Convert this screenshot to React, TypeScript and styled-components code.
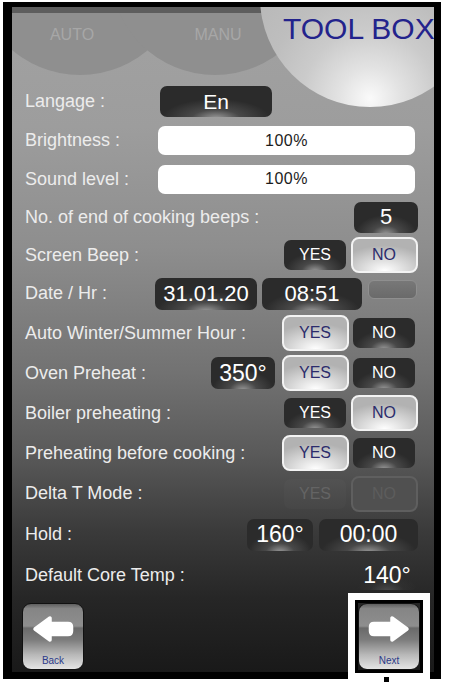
import styled, { createGlobalStyle, css } from 'styled-components';

const GlobalStyle = createGlobalStyle`
    html, body {
        margin: 0;
        padding: 0;
        background: #ffffff;
    }
    body {
        font-family: 'Liberation Sans', Arial, Helvetica, sans-serif;
    }
`;

const Page = styled.div`
    width: 453px;
    height: 682px;
    padding: 2px 0 0 3px;
    box-sizing: border-box;
    overflow: hidden;
`;

const Frame = styled.div`
    width: 438px;
    height: 677px;
    box-sizing: border-box;
    border-style: solid;
    border-color: #000;
    border-width: 5px 7px 7px 9px;
    display: flex;
    flex-direction: column;
    background: linear-gradient(
        180deg,
        #a2a2a2 0%,
        #9d9d9d 18%,
        #8e8e8e 36%,
        #727272 55%,
        #5a5a5a 67%,
        #3a3a3a 79%,
        #262626 89%,
        #191919 100%
    );
`;

const Header = styled.div`
    height: 100px;
    flex-shrink: 0;
    display: flex;
    align-items: flex-start;
    overflow: hidden;
`;

const TabStrip = styled.div`
    width: 300px;
    height: 68px;
    flex-shrink: 0;
    box-sizing: border-box;
    border-top: 6px solid #5d5d5d;
    display: flex;
    align-items: flex-start;
    overflow: hidden;
`;

const Tab = styled.div<{ $left: number; $dx: number }>`
    width: 210px;
    height: 210px;
    flex-shrink: 0;
    margin: -148px 0 0 ${(p) => p.$left}px;
    box-sizing: border-box;
    padding-top: 161px;
    padding-left: ${(p) => Math.max(0, p.$dx * 2)}px;
    padding-right: ${(p) => Math.max(0, -p.$dx * 2)}px;
    border-radius: 50%;
    background: #8f8f8f;
    color: #a7a7a7;
    font-size: 16px;
    line-height: 18px;
    text-align: center;
`;

const ToolBox = styled.div`
    width: 220px;
    height: 220px;
    flex-shrink: 0;
    margin: -120px 0 0 -52px;
    box-sizing: border-box;
    padding: 127px 0 0 23px;
    border-radius: 50%;
    background: radial-gradient(
        circle 150px at 50% 96%,
        #fafafa 0%,
        #e3e3e3 20%,
        #cbcbcb 45%,
        #bebebe 70%,
        #b8b8b8 100%
    );
    color: #23238c;
    font-size: 30px;
    line-height: 30px;
    white-space: nowrap;
`;

const Rows = styled.div`
    margin-top: -25px;
    display: flex;
    flex-direction: column;
`;

const Row = styled.div<{ $h?: number }>`
    height: ${(p) => p.$h ?? 39}px;
    display: flex;
    align-items: center;
    padding: 0 16px 0 13px;
`;

const Label = styled.div<{ $w?: number }>`
    ${(p) =>
        p.$w
            ? css`
                  width: ${p.$w}px;
                  flex-shrink: 0;
              `
            : css`
                  flex: 1;
              `}
    color: #ececec;
    font-size: 18px;
    white-space: nowrap;
`;

const darkFill = css`
    background: radial-gradient(
            ellipse 48% 62% at 50% 104%,
            rgba(200, 200, 200, 0.7) 0%,
            rgba(140, 140, 140, 0.3) 45%,
            rgba(60, 60, 60, 0) 100%
        ),
        #2b2b2b;
`;

const ValueBox = styled.div<{ $w: number; $h?: number; $fs?: number; $gap?: number; $faint?: boolean }>`
    width: ${(p) => p.$w}px;
    height: ${(p) => p.$h ?? 32}px;
    flex-shrink: 0;
    margin-right: ${(p) => p.$gap ?? 0}px;
    display: flex;
    align-items: center;
    justify-content: center;
    border-radius: 7px;
    color: #ffffff;
    font-size: ${(p) => p.$fs ?? 22}px;
    ${darkFill}
    ${(p) =>
        p.$faint &&
        css`
            background: radial-gradient(
                ellipse 50% 55% at 50% 104%,
                rgba(110, 110, 110, 0.5) 0%,
                rgba(80, 80, 80, 0.15) 55%,
                rgba(40, 40, 40, 0) 100%
            );
        `}
`;

const Blank = styled.div`
    width: 47px;
    height: 17px;
    flex-shrink: 0;
    align-self: flex-start;
    margin-top: 6px;
    border: 1px solid #8f8f8f;
    border-radius: 6px;
    background: linear-gradient(#787878, #6a6a6a);
`;

const Bar = styled.div`
    flex: 1;
    height: 29px;
    margin-right: 3px;
    display: flex;
    align-items: center;
    justify-content: center;
    border-radius: 7px;
    background: #ffffff;
    color: #1c1c1c;
    font-size: 16px;
    letter-spacing: 0.5px;
`;

const Pair = styled.div`
    display: flex;
    gap: 1px;
    flex-shrink: 0;
`;

const Slot = styled.div`
    width: 68px;
    height: 38px;
    display: flex;
    align-items: center;
    justify-content: center;
`;

const Toggle = styled.div<{ $on?: boolean; $dim?: boolean }>`
    display: flex;
    align-items: center;
    justify-content: center;
    font-size: 16px;
    box-sizing: border-box;
    ${(p) =>
        p.$on
            ? css`
                  width: 67px;
                  height: 36px;
                  border: 2px solid #f3f3f3;
                  border-radius: 8px;
                  color: #2c2c6c;
                  background: radial-gradient(
                      ellipse 75% 80% at 50% 100%,
                      #ffffff 0%,
                      #e0e0e0 40%,
                      #b2b2b2 100%
                  );
              `
            : css`
                  width: 62px;
                  height: 30px;
                  border-radius: 7px;
                  color: #ffffff;
                  ${darkFill}
              `}
    ${(p) =>
        p.$dim &&
        (p.$on
            ? css`
                  border-color: #5f5f5f;
                  background: #505050;
                  color: #5d5d5d;
              `
            : css`
                  background: rgba(255, 255, 255, 0.02);
                  color: #646464;
              `)}
`;

const BottomBar = styled.div`
    flex: 1;
    display: flex;
    justify-content: space-between;
    align-items: flex-start;
    padding: 5px 11px 0 10px;
`;

const NavButton = styled.button<{ $offset?: number }>`
    width: 62px;
    height: 67px;
    margin-top: ${(p) => p.$offset ?? 0}px;
    padding: 11px 0 3px;
    box-sizing: border-box;
    display: flex;
    flex-direction: column;
    align-items: center;
    justify-content: space-between;
    border: 1px solid #111111;
    border-radius: 9px;
    background: linear-gradient(
        180deg,
        #5f5f5f 0%,
        #858585 7%,
        #8e8e8e 34%,
        #6a6a6a 37%,
        #7c7c7c 55%,
        #b8b8b8 78%,
        #e4e4e4 100%
    );
    color: #2b3a8a;
    font-family: 'Liberation Sans', Arial, sans-serif;
    font-size: 10px;
    cursor: pointer;
`;

const Arrow = styled.svg<{ $flip?: boolean }>`
    width: 42px;
    height: 28px;
    transform: ${(p) => (p.$flip ? 'scaleX(-1)' : 'none')};
`;

const NextMark = styled.div`
    position: relative;
    border: 3px solid #000000;
    box-shadow: 0 0 0 7px #ffffff;

    &::after {
        content: '';
        position: absolute;
        left: 26px;
        bottom: -12px;
        width: 5px;
        height: 5px;
        background: #000000;
    }
`;

const ArrowIcon = ({ flip }: { flip?: boolean }) => (
    <Arrow $flip={flip} viewBox="0 0 42 28">
        <path
            d="M3 14 L18 3 L18 8.5 L36 8.5 Q39.5 8.5 39.5 12 L39.5 16 Q39.5 19.5 36 19.5 L18 19.5 L18 25 Z"
            fill="#ffffff"
            stroke="#ffffff"
            strokeWidth="3.5"
            strokeLinejoin="round"
        />
    </Arrow>
);

type YesNoProps = {
    yes: boolean;
    dim?: boolean;
};

const YesNo = ({ yes, dim }: YesNoProps) => (
    <Pair>
        <Slot>
            <Toggle $on={yes} $dim={dim}>
                YES
            </Toggle>
        </Slot>
        <Slot>
            <Toggle $on={!yes} $dim={dim}>
                NO
            </Toggle>
        </Slot>
    </Pair>
);

const App = () => {
    return (
        <Page>
            <GlobalStyle />
            <Frame>
                <Header>
                    <TabStrip>
                        <Tab $left={-37} $dx={-8}>
                            AUTO
                        </Tab>
                        <Tab $left={-75} $dx={3}>
                            MANU
                        </Tab>
                    </TabStrip>
                    <ToolBox>TOOL BOX</ToolBox>
                </Header>

                <Rows>
                    <Row>
                        <Label $w={135}>Langage :</Label>
                        <ValueBox $w={112} $h={31} $fs={21}>
                            En
                        </ValueBox>
                    </Row>
                    <Row>
                        <Label $w={133}>Brightness :</Label>
                        <Bar>100%</Bar>
                    </Row>
                    <Row $h={38}>
                        <Label $w={133}>Sound level :</Label>
                        <Bar>100%</Bar>
                    </Row>
                    <Row $h={38}>
                        <Label>No. of end of cooking beeps :</Label>
                        <ValueBox $w={64} $h={31}>
                            5
                        </ValueBox>
                    </Row>
                    <Row $h={38}>
                        <Label>Screen Beep :</Label>
                        <YesNo yes={false} />
                    </Row>
                    <Row>
                        <Label $w={130}>Date / Hr :</Label>
                        <ValueBox $w={102} $gap={5}>
                            31.01.20
                        </ValueBox>
                        <ValueBox $w={100} $gap={6}>
                            08:51
                        </ValueBox>
                        <Blank />
                    </Row>
                    <Row $h={40}>
                        <Label>Auto Winter/Summer Hour :</Label>
                        <YesNo yes />
                    </Row>
                    <Row $h={40}>
                        <Label>Oven Preheat :</Label>
                        <ValueBox $w={64} $fs={23} $gap={6}>
                            350°
                        </ValueBox>
                        <YesNo yes />
                    </Row>
                    <Row $h={40}>
                        <Label>Boiler preheating :</Label>
                        <YesNo yes={false} />
                    </Row>
                    <Row $h={40}>
                        <Label>Preheating before cooking :</Label>
                        <YesNo yes />
                    </Row>
                    <Row $h={41}>
                        <Label>Delta T Mode :</Label>
                        <YesNo yes={false} dim />
                    </Row>
                    <Row $h={41}>
                        <Label>Hold :</Label>
                        <ValueBox $w={66} $fs={23} $gap={6}>
                            160°
                        </ValueBox>
                        <ValueBox $w={99} $fs={23}>
                            00:00
                        </ValueBox>
                    </Row>
                    <Row $h={40}>
                        <Label>Default Core Temp :</Label>
                        <ValueBox $w={62} $h={30} $fs={23} $faint>
                            140°
                        </ValueBox>
                    </Row>
                </Rows>

                <BottomBar>
                    <NavButton $offset={3}>
                        <ArrowIcon />
                        Back
                    </NavButton>
                    <NextMark>
                        <NavButton>
                            <ArrowIcon flip />
                            Next
                        </NavButton>
                    </NextMark>
                </BottomBar>
            </Frame>
        </Page>
    );
};

export default App;
